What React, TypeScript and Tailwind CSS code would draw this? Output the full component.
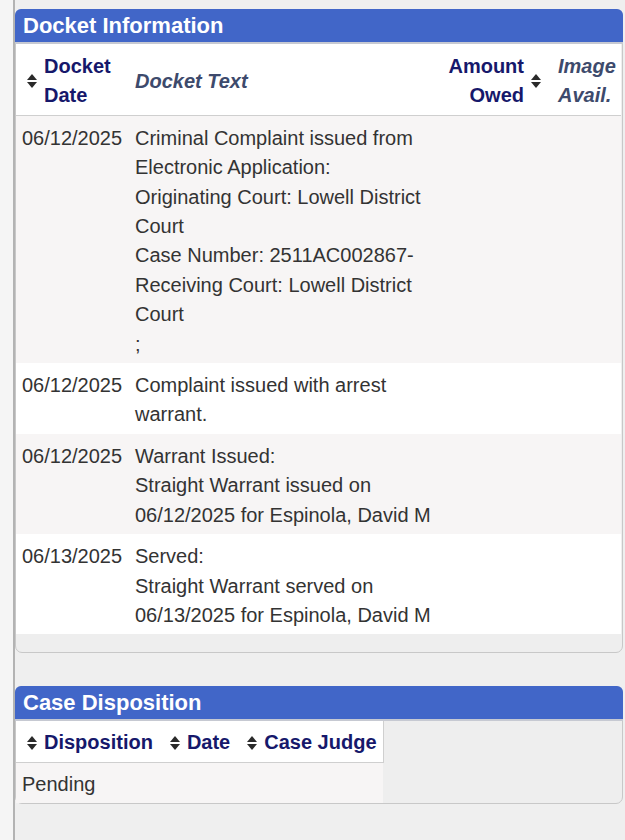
const SortIcon = () => (
  <svg width="10" height="14" viewBox="0 0 10 14" className="shrink-0">
    <polygon points="5,0 10,6 0,6" fill="#2a2a2a" />
    <polygon points="0,8 10,8 5,14" fill="#2a2a2a" />
  </svg>
);

const docketRows = [
  {
    date: "06/12/2025",
    lines: [
      "Criminal Complaint issued from Electronic Application:",
      "Originating Court: Lowell District Court",
      "Case Number: 2511AC002867-",
      "Receiving Court: Lowell District Court",
      ";",
    ],
  },
  { date: "06/12/2025", lines: ["Complaint issued with arrest warrant."] },
  {
    date: "06/12/2025",
    lines: ["Warrant Issued:", "Straight Warrant issued on 06/12/2025 for Espinola, David M"],
  },
  {
    date: "06/13/2025",
    lines: ["Served:", "Straight Warrant served on 06/13/2025 for Espinola, David M"],
  },
];

function PanelHeader({ title }: { title: string }) {
  return (
    <div className="h-[35px] bg-[#4166c8] rounded-t-[6px] border-b-2 border-[#c6c9d2] flex items-center pl-2 -mx-px -mt-px">
      <h2 className="text-[22px] font-bold text-white leading-none">{title}</h2>
    </div>
  );
}

export default function App() {
  return (
    <div
      className="min-h-screen bg-[#f5f5f5] pl-[13px] text-[#333]"
      style={{ fontFamily: '"Liberation Sans", Arial, Helvetica, sans-serif' }}
    >
      <div className="min-h-[840px] border-l-2 border-[#b3b3b3] bg-[#efefef] pt-[9px]">
        {/* 도켓 정보 */}
        <div className="w-[608px] border border-[#c8c8c8] rounded-[7px] bg-[#eeeeee] pb-[18px]">
          <PanelHeader title="Docket Information" />
          <table className="w-[605px] table-fixed border-collapse text-[20px] leading-[29.4px]">
            <colgroup>
              <col className="w-[112px]" />
              <col className="w-[313px]" />
              <col className="w-[109px]" />
              <col />
            </colgroup>
            <thead>
              <tr className="bg-white border-b border-[#cfcfcf]">
                <th className="pt-[8px] pb-[4px] pl-[11px] text-left font-bold text-[#16186b]">
                  <div className="flex items-center gap-[7px]">
                    <SortIcon />
                    <span>
                      Docket
                      <br />
                      Date
                    </span>
                  </div>
                </th>
                <th className="pt-[8px] pb-[4px] pl-[7px] text-left font-bold italic text-[#3d4a6c]">Docket Text</th>
                <th className="pt-[8px] pb-[4px] pr-[9px] font-bold text-[#16186b]">
                  <div className="flex items-center justify-end gap-[7px]">
                    <span className="text-right">
                      Amount
                      <br />
                      Owed
                    </span>
                    <SortIcon />
                  </div>
                </th>
                <th className="pt-[8px] pb-[4px] pl-[8px] text-left font-bold italic text-[#3d4a6c]">
                  Image
                  <br />
                  Avail.
                </th>
              </tr>
            </thead>
            <tbody>
              {docketRows.map((row, idx) => (
                <tr key={idx} className={idx % 2 === 0 ? "bg-[#f7f5f5]" : "bg-white"}>
                  <td className="align-top pt-[8px] pb-[4px] pl-[6px]">{row.date}</td>
                  <td className="align-top pt-[8px] pb-[4px] pl-[7px] pr-[6px]">
                    {row.lines.map((line, i) => (
                      <div key={i}>{line}</div>
                    ))}
                  </td>
                  <td />
                  <td />
                </tr>
              ))}
            </tbody>
          </table>
        </div>

        {/* 처분 */}
        <div className="mt-[33px] w-[608px] border border-[#c8c8c8] rounded-[7px] bg-[#eeeeee]">
          <PanelHeader title="Case Disposition" />
          <table className="border-collapse text-[20px] leading-[29.4px]">
            <thead>
              <tr className="bg-white border-b border-r border-[#cfcfcf]">
                {["Disposition", "Date", "Case Judge"].map((h) => (
                  <th key={h} className="pt-[7px] pb-[4px] pl-[11px] pr-[6px] text-left font-bold text-[#16186b]">
                    <div className="flex items-center gap-[7px] whitespace-nowrap">
                      <SortIcon />
                      <span>{h}</span>
                    </div>
                  </th>
                ))}
              </tr>
            </thead>
            <tbody>
              <tr className="bg-[#f7f5f5]">
                <td className="pt-[7px] pb-[4px] pl-[6px]">Pending</td>
                <td />
                <td />
              </tr>
            </tbody>
          </table>
        </div>
      </div>
    </div>
  );
}
